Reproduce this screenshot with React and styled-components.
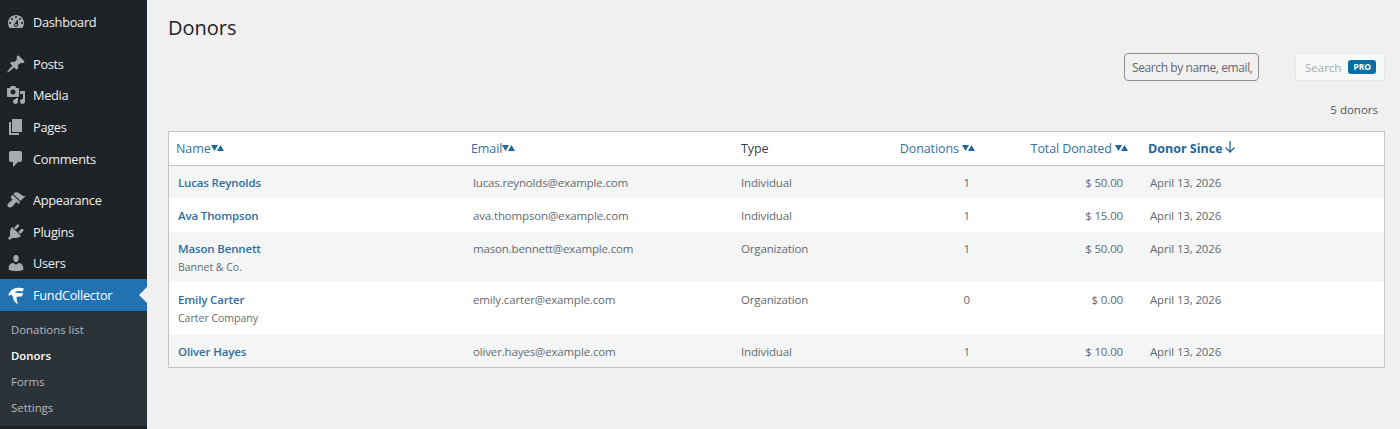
import React from 'react'
import styled, {createGlobalStyle} from 'styled-components'

const GlobalStyle = createGlobalStyle`
  html, body {
    margin: 0;
    padding: 0;
    height: 100%;
    background: #f0f0f1;
    overflow: hidden;
  }
  #root {
    height: 100%;
  }
`

const icons = {
  dashboard: 'M3.76 16h12.48c1.1-1.37 1.76-3.11 1.76-5 0-4.42-3.58-8-8-8s-8 3.58-8 8c0 1.89.66 3.63 1.76 5zM10 4c.55 0 1 .45 1 1s-.45 1-1 1-1-.45-1-1 .45-1 1-1zM6 6c.55 0 1 .45 1 1s-.45 1-1 1-1-.45-1-1 .45-1 1-1zm8 0c.55 0 1 .45 1 1s-.45 1-1 1-1-.45-1-1 .45-1 1-1zm-5.37 5.55L12 7v6c0 1.1-.9 2-2 2s-2-.9-2-2c0-.57.24-1.08.63-1.45zM4 10c.55 0 1 .45 1 1s-.45 1-1 1-1-.45-1-1 .45-1 1-1zm12 0c.55 0 1 .45 1 1s-.45 1-1 1-1-.45-1-1 .45-1 1-1zm-5 3c0-.55-.45-1-1-1s-1 .45-1 1 .45 1 1 1 1-.45 1-1z',
  posts: 'M10.44 3.02l1.82-1.82 6.36 6.35-1.83 1.82c-1.05-.68-2.48-.57-3.41.36l-.75.75c-.92.93-1.04 2.35-.35 3.41l-1.83 1.82-2.41-2.41-2.8 2.79c-.42.42-3.38 2.71-3.8 2.29s1.86-3.39 2.28-3.81l2.79-2.79L4.1 9.36l1.83-1.82c1.05.69 2.48.57 3.4-.36l.75-.75c.93-.92 1.05-2.35.36-3.41z',
  media: 'M13 11V4c0-.55-.45-1-1-1h-1.67L9 1H5L3.67 3H2c-.55 0-1 .45-1 1v7c0 .55.45 1 1 1h10c.55 0 1-.45 1-1zM7 4.5c1.38 0 2.5 1.12 2.5 2.5S8.38 9.5 7 9.5 4.5 8.38 4.5 7 5.62 4.5 7 4.5zM14 6h5v10.5c0 1.38-1.12 2.5-2.5 2.5S14 17.88 14 16.5s1.12-2.5 2.5-2.5c.17 0 .34.02.5.05V9h-3V6zm-4 8.05V13h2v3.5c0 1.38-1.12 2.5-2.5 2.5S7 17.88 7 16.5 8.12 14 9.5 14c.17 0 .34.02.5.05z',
  pages: 'M6 15V2h10v13H6zm-1 1h8v2H3V5h2v11z',
  comments: 'M5 2h9c1.1 0 2 .9 2 2v7c0 1.1-.9 2-2 2h-2l-5 5v-5H5c-1.1 0-2-.9-2-2V4c0-1.1.9-2 2-2z',
  appearance: 'M14.48 11.06L7.41 3.99l1.5-1.5c.5-.56 2.3-.47 3.51.32 1.21.8 1.43 1.28 2.91 2.1 1.18.64 2.45 1.26 4.45.85zm-.71.71L6.7 4.7 4.93 6.47c-.39.39-.39 1.02 0 1.41l1.06 1.06c.39.39.39 1.03 0 1.42-.6.6-1.43 1.11-2.21 1.69-.35.26-.7.53-1.01.84C1.43 13.71.96 15.65 2.15 16.85s3.14.72 4.99-1.13c.31-.31.58-.66.84-1.01.58-.78 1.09-1.61 1.69-2.21.39-.39 1.02-.39 1.41 0l1.06 1.06c.39.39 1.02.39 1.41 0z',
  plugins: 'M13.11 4.36L9.87 7.6 8 5.73l3.24-3.24c.35-.34 1.05-.2 1.56.32.52.51.66 1.21.31 1.55zm-8 1.77l.91-1.12 9.01 9.01-1.19.84c-.71.71-2.63 1.16-3.82 1.16H6.14L4.9 17.26c-.59.59-1.54.59-2.12 0-.59-.58-.59-1.53 0-2.12l1.24-1.24v-3.88c0-1.13.4-3.19 1.09-3.89zm7.26 3.97l3.24-3.24c.34-.35 1.04-.21 1.55.31.52.51.66 1.21.31 1.55l-3.24 3.25z',
  users: 'M10 9.25c-2.27 0-2.73-3.44-2.73-3.44C7 4.02 7.82 2 9.97 2c2.16 0 2.98 2.02 2.71 3.81 0 0-.41 3.44-2.68 3.44zm0 2.57L12.72 10c2.39 0 4.52 2.33 4.52 4.53v2.49s-3.65 1.13-7.24 1.13c-3.65 0-7.24-1.13-7.24-1.13v-2.49c0-2.25 1.94-4.48 4.47-4.48z',
}

const menu = [
  {label: 'Dashboard', icon: 'dashboard', gap: true},
  {label: 'Posts', icon: 'posts'},
  {label: 'Media', icon: 'media'},
  {label: 'Pages', icon: 'pages'},
  {label: 'Comments', icon: 'comments', gap: true},
  {label: 'Appearance', icon: 'appearance'},
  {label: 'Plugins', icon: 'plugins'},
  {label: 'Users', icon: 'users'},
]

const submenu = [
  {label: 'Donations list'},
  {label: 'Donors', current: true},
  {label: 'Forms'},
  {label: 'Settings'},
]

const donors = [
  {name: 'Lucas Reynolds', email: 'lucas.reynolds@example.com', type: 'Individual', count: 1, total: '$ 50.00', height: 32, pad: 8},
  {name: 'Ava Thompson', email: 'ava.thompson@example.com', type: 'Individual', count: 1, total: '$ 15.00', height: 34, pad: 9},
  {name: 'Mason Bennett', company: 'Bannet & Co.', email: 'mason.bennett@example.com', type: 'Organization', count: 1, total: '$ 50.00', height: 50, pad: 8},
  {name: 'Emily Carter', company: 'Carter Company', email: 'emily.carter@example.com', type: 'Organization', count: 0, total: '$ 0.00', height: 53, pad: 9},
  {name: 'Oliver Hayes', email: 'oliver.hayes@example.com', type: 'Individual', count: 1, total: '$ 10.00', height: 32, pad: 8},
]

function SortArrows () {
  return (
    <Arrows viewBox='0 0 13 6' aria-hidden='true'>
      <path d='M0 0h7L3.5 6z' />
      <path d='M6 6h7L9.5 0z' />
    </Arrows>
  )
}

export default function App () {
  return (
    <Page>
      <GlobalStyle />
      <Sidebar>
        <MenuList>
          {menu.map(item => (
            <MenuItem key={item.label} $gap={item.gap}>
              <MenuIcon viewBox='0 0 20 20' aria-hidden='true'><path d={icons[item.icon]} /></MenuIcon>
              {item.label}
            </MenuItem>
          ))}
        </MenuList>
        <ActiveItem>
          <BrandIcon viewBox='0 0 20 20' aria-hidden='true'>
            <path d='M2.5 11C2.5 6.5 7 3 12 2.8c2.500-.1 4.500.2 6 1l-1.500 2.700c-2.500-.9-6-1-7.700 1l8.700 1-2 3-5 .3c0 2.200.5 5.200 1.500 7.700-3.500-2-5-5-5.200-7.700C6.500 10 5 9.500 2.500 11z' />
          </BrandIcon>
          FundCollector
        </ActiveItem>
        <Submenu>
          {submenu.map(item => (
            <SubmenuItem key={item.label} $current={item.current}>{item.label}</SubmenuItem>
          ))}
        </Submenu>
      </Sidebar>
      <Main>
        <Title>Donors</Title>
        <SearchRow>
          <SearchInput placeholder='Search by name, email,' readOnly />
          <SearchButton>
            Search
            <ProBadge>PRO</ProBadge>
          </SearchButton>
        </SearchRow>
        <Count>5 donors</Count>
        <TableCard>
          <Table>
            <colgroup>
              <col style={{width: 295}} />
              <col style={{width: 268}} />
              <col style={{width: 150}} />
              <col style={{width: 106}} />
              <col style={{width: 153}} />
              <col />
            </colgroup>
            <thead>
              <tr>
                <HeadCell><HeadLink>Name<SortArrows /></HeadLink></HeadCell>
                <HeadCell><HeadLink>Email<SortArrows /></HeadLink></HeadCell>
                <PlainHead>Type</PlainHead>
                <HeadCell $right><HeadLink>Donations <SortArrows /></HeadLink></HeadCell>
                <HeadCell $right><HeadLink>Total Donated <SortArrows /></HeadLink></HeadCell>
                <HeadCell>
                  <ActiveLink>
                    Donor Since
                    <DownArrow viewBox='0 0 12 14' aria-hidden='true'><path d='M6 1v11M1.5 7.5 6 12l4.500-4.500' /></DownArrow>
                  </ActiveLink>
                </HeadCell>
              </tr>
            </thead>
            <tbody>
              {donors.map((donor, i) => (
                <Row key={donor.name} $striped={i % 2 === 0} $height={donor.height}>
                  <Cell $pad={donor.pad}>
                    <DonorName>{donor.name}</DonorName>
                    {donor.company && <Company>{donor.company}</Company>}
                  </Cell>
                  <Cell $pad={donor.pad}>{donor.email}</Cell>
                  <Cell $pad={donor.pad}>{donor.type}</Cell>
                  <Cell $pad={donor.pad} $right>{donor.count}</Cell>
                  <Cell $pad={donor.pad} $right>{donor.total}</Cell>
                  <Cell $pad={donor.pad}>April 13, 2026</Cell>
                </Row>
              ))}
            </tbody>
          </Table>
        </TableCard>
      </Main>
    </Page>
  )
}

const Page = styled.div`
  display: flex;
  height: 429px;
  font-family: "Open Sans", sans-serif;
  color: #646970;
`

const Sidebar = styled.nav`
  flex: 0 0 147px;
  background: #1d2327;
  padding-top: 6.4px;
  box-sizing: border-box;
`

const MenuList = styled.div`
  display: flex;
  flex-direction: column;
`

const MenuItem = styled.div`
  display: flex;
  align-items: center;
  height: 31.6px;
  margin-bottom: ${props => props.$gap ? 10 : 0}px;
  padding-left: 6px;
  gap: 7px;
  font-size: 12.8px;
  letter-spacing: -0.3px;
  color: #f0f0f1;
`

const MenuIcon = styled.svg`
  width: 20px;
  height: 20px;
  fill: #a7aaad;
  flex: none;
`

const ActiveItem = styled.div`
  position: relative;
  display: flex;
  align-items: center;
  height: 31.6px;
  padding-left: 6px;
  gap: 7px;
  font-size: 12.8px;
  letter-spacing: -0.3px;
  color: #fff;
  background: #2271b1;

  &::after {
    content: '';
    position: absolute;
    right: 0;
    top: 8px;
    border: 8px solid transparent;
    border-right-color: #f0f0f1;
  }
`

const BrandIcon = styled.svg`
  width: 20px;
  height: 20px;
  fill: #fff;
  flex: none;
`

const Submenu = styled.div`
  display: flex;
  flex-direction: column;
  height: 115px;
  padding-top: 6.2px;
  box-sizing: border-box;
  background: #2c3338;
`

const SubmenuItem = styled.div`
  height: 26px;
  line-height: 26px;
  padding-left: 11px;
  font-size: 11.4px;
  font-weight: ${props => props.$current ? 600 : 400};
  color: ${props => props.$current ? '#fff' : '#b4b9be'};
`

const Main = styled.main`
  flex: 1;
  min-width: 0;
  padding: 0 15px 0 21px;
  display: flex;
  flex-direction: column;
`

const Title = styled.h1`
  margin: 0;
  height: 53px;
  line-height: 56px;
  font-size: 20px;
  font-weight: 400;
  color: #1d2327;
`

const SearchRow = styled.div`
  display: flex;
  justify-content: flex-end;
  gap: 36px;
  height: 28px;
`

const SearchInput = styled.input`
  width: 135px;
  height: 28px;
  box-sizing: border-box;
  padding: 0 0 0 7px;
  border: 1px solid #8c8f94;
  border-radius: 4px;
  background: #f0f0f1;
  font-family: inherit;
  font-size: 12px;
  letter-spacing: -0.4px;
  color: #646970;

  &::placeholder {
    color: #646970;
    opacity: 1;
  }
`

const SearchButton = styled.div`
  display: flex;
  align-items: center;
  gap: 7px;
  width: 90px;
  height: 28px;
  box-sizing: border-box;
  padding-left: 9px;
  border: 1px solid #e4e6e8;
  border-radius: 3px;
  background: #f6f7f7;
  font-size: 11.5px;
  color: #a7aaad;
`

const ProBadge = styled.span`
  padding: 0 5px;
  height: 14px;
  line-height: 14px;
  border-radius: 3px;
  background: #0a6ea5;
  color: #fff;
  font-size: 8.5px;
  font-weight: 700;
`

const Count = styled.div`
  height: 50px;
  padding: 20px 7px 0 0;
  box-sizing: border-box;
  text-align: right;
  font-size: 11.5px;
  line-height: 18px;
  color: #50575e;
`

const TableCard = styled.div`
  border: 1px solid #c3c4c7;
  background: #fff;
`

const Table = styled.table`
  width: 100%;
  table-layout: fixed;
  border-collapse: collapse;
`

const HeadCell = styled.th`
  height: 33px;
  padding: 0 ${props => props.$right ? 13 : 7}px 0 7px;
  border-bottom: 1px solid #c3c4c7;
  text-align: ${props => props.$right ? 'right' : 'left'};
  font-weight: 400;
  font-size: 12.5px;
  letter-spacing: -0.1px;
`

const PlainHead = styled(HeadCell)`
  padding-left: 9px;
  color: #3c434a;
`

const HeadLink = styled.span`
  color: #35719f;
  white-space: nowrap;
`

const ActiveLink = styled(HeadLink)`
  font-weight: 700;
  letter-spacing: 0;
  color: #20689f;
`

const Arrows = styled.svg`
  width: 13px;
  height: 6px;
  margin-bottom: 2px;
  fill: #20689f;
`

const DownArrow = styled.svg`
  width: 12px;
  height: 14px;
  margin-left: 1px;
  vertical-align: -1px;
  fill: none;
  stroke: #20689f;
  stroke-width: 1.3;
`

const Row = styled.tr`
  height: ${props => props.$height}px;
  background: ${props => props.$striped ? '#f4f6f6' : '#fff'};
`

const Cell = styled.td`
  padding: ${props => props.$pad}px ${props => props.$right ? 18 : 9}px 0 9px;
  text-align: ${props => props.$right ? 'right' : 'left'};
  vertical-align: top;
  font-size: 11.5px;
  letter-spacing: -0.15px;
  line-height: 18px;
  color: #646970;
`

const DonorName = styled.div`
  font-weight: 600;
  color: #2f6ea3;
`

const Company = styled.div`
  font-size: 10.5px;
  letter-spacing: 0;
  color: #646970;
`
